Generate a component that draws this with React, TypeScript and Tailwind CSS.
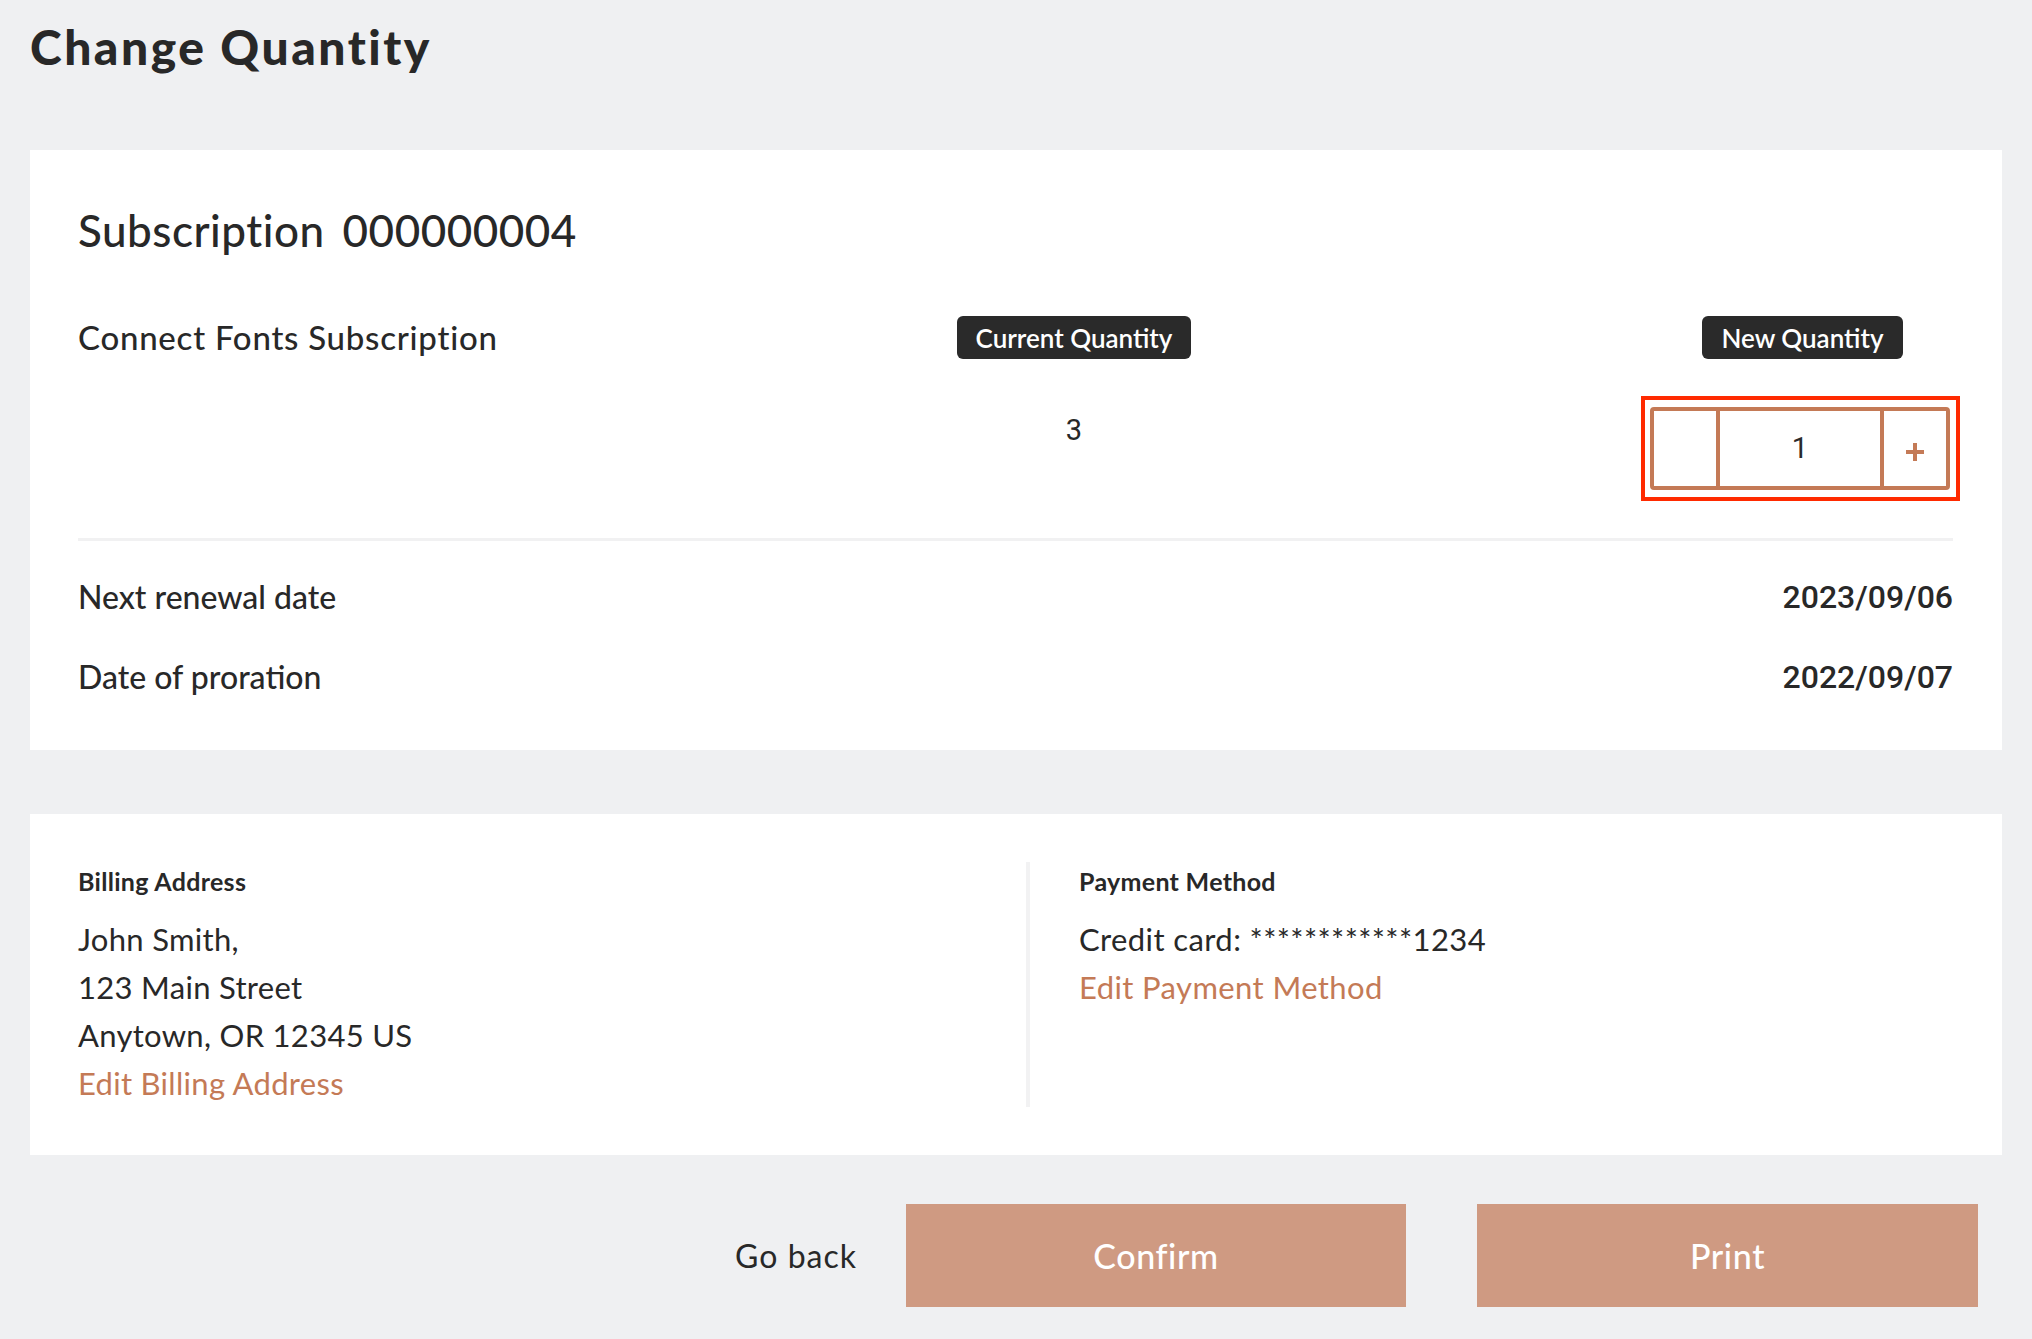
import React from "react";

const sans = { fontFamily: "Lato, 'Noto Sans', sans-serif" };
const num = { fontFamily: "Roboto, 'Liberation Sans', sans-serif" };

function Badge({ children }: { children: React.ReactNode }) {
  return (
    <span
      className="inline-flex h-[43px] items-center rounded-[6px] bg-[#2a2a2a] px-[19px] text-[26px] font-semibold leading-none text-white"
      style={sans}
    >
      {children}
    </span>
  );
}

function Stepper() {
  return (
    <div className="relative">
      <div className="pointer-events-none absolute -bottom-[11px] -left-[9px] -right-[10px] -top-[11px] border-[4px] border-[#ff2a00]" />
      <div className="flex h-[83px] w-[300px] rounded-[4px] border-[4px] border-[#c47a56] bg-white">
        <button className="w-[62px]" aria-label="decrease" />
        <div className="w-[4px] bg-[#c47a56]" />
        <div
          className="flex w-[160px] items-center justify-center text-[29px] text-[#2a2a2a]"
          style={num}
        >
          1
        </div>
        <div className="w-[4px] bg-[#c47a56]" />
        <button className="flex w-[62px] items-center justify-center pt-[6px]" aria-label="increase">
          <svg width="20" height="20" viewBox="0 0 20 20">
            <path d="M10 1v18M1 10h18" stroke="#c47a56" strokeWidth="4" />
          </svg>
        </button>
      </div>
    </div>
  );
}

export default function App() {
  return (
    <div className="min-h-screen bg-[#eff0f2] px-[30px] text-[#282828]" style={sans}>
      <h1 className="pt-[19px] text-[48px] font-black leading-[56px] tracking-[2.5px]">Change Quantity</h1>

      <section className="mt-[75px] bg-white pb-[53px] pl-[48px] pr-[49px] pt-[54px]">
        <h2 className="text-[44px] font-medium leading-[53px] tracking-[0.5px]">
          Subscription<span className="ml-[18px]">000000004</span>
        </h2>

        <div className="mt-[59px] grid grid-cols-[846px_300px_1fr_303px] items-center">
          <div className="text-[33px] font-medium leading-[43px] tracking-[0.75px]">Connect Fonts Subscription</div>
          <div className="flex justify-center">
            <Badge>Current Quantity</Badge>
          </div>
          <div />
          <div className="flex justify-center pl-[2px]">
            <Badge>New Quantity</Badge>
          </div>
        </div>

        <div className="mt-[48px] grid grid-cols-[846px_300px_1fr_303px] items-start">
          <div />
          <div className="pt-[2px] text-center text-[29px] leading-[42px]" style={num}>
            3
          </div>
          <div />
          <div className="flex">
            <Stepper />
          </div>
        </div>

        <div className="mt-[48px] h-[3px] bg-[#f1f1f2]" />

        <div className="mt-[36px] flex items-center justify-between">
          <span className="text-[32px] font-medium leading-[40px]">Next renewal date</span>
          <span className="text-[32px] font-medium leading-[40px]" style={num}>
            2023/09/06
          </span>
        </div>
        <div className="mt-[40px] flex items-center justify-between">
          <span className="text-[32px] font-medium leading-[40px]">Date of proration</span>
          <span className="text-[32px] font-medium leading-[40px]" style={num}>
            2022/09/07
          </span>
        </div>
      </section>

      <section className="mt-[64px] flex bg-white p-[48px]">
        <div className="w-[948px]">
          <div className="pt-[4px] text-[25px] font-bold leading-[30px] tracking-[0.3px]">Billing Address</div>
          <div className="mt-[19px] text-[31px] leading-[48px] tracking-[0.3px]">
            <div>John Smith,</div>
            <div>123 Main Street</div>
            <div>Anytown, OR 12345 US</div>
            <a className="block text-[#c47a56]" href="#">
              Edit Billing Address
            </a>
          </div>
        </div>
        <div className="w-[4px] bg-[#f2f2f3]" />
        <div className="pl-[49px]">
          <div className="pt-[4px] text-[25px] font-bold leading-[30px] tracking-[0.3px]">Payment Method</div>
          <div className="mt-[19px] text-[31px] leading-[48px] tracking-[0.4px]">
            <div>Credit card: ************1234</div>
            <a className="block text-[#c47a56]" href="#">
              Edit Payment Method
            </a>
          </div>
        </div>
      </section>

      <div className="mt-[49px] flex items-center justify-end pb-[31px] pr-[24px]">
        <button className="text-[32px] leading-[40px] tracking-[1px] text-[#282828]">Go back</button>
        <button className="ml-[49px] flex h-[103px] w-[500px] items-center justify-center bg-[#cf9a82] text-[34px] font-medium tracking-[0.6px] text-white">
          Confirm
        </button>
        <button className="ml-[71px] flex h-[103px] w-[501px] items-center justify-center bg-[#cf9a82] text-[34px] font-medium tracking-[0.6px] text-white">
          Print
        </button>
      </div>
    </div>
  );
}
